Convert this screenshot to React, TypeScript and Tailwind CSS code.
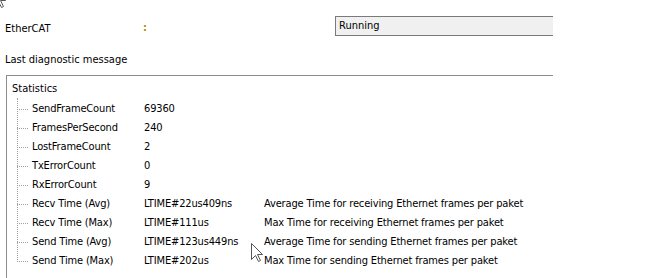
import React from "react";

interface StatRow {
  label: string;
  value: string;
  desc?: string;
}

const rows: StatRow[] = [
  { label: "SendFrameCount", value: "69360" },
  { label: "FramesPerSecond", value: "240" },
  { label: "LostFrameCount", value: "2" },
  { label: "TxErrorCount", value: "0" },
  { label: "RxErrorCount", value: "9" },
  { label: "Recv Time (Avg)", value: "LTIME#22us409ns", desc: "Average Time for receiving Ethernet frames per paket" },
  { label: "Recv Time (Max)", value: "LTIME#111us", desc: "Max Time for receiving Ethernet frames per paket" },
  { label: "Send Time (Avg)", value: "LTIME#123us449ns", desc: "Average Time for sending Ethernet frames per paket" },
  { label: "Send Time (Max)", value: "LTIME#202us", desc: "Max Time for sending Ethernet frames per paket" },
];

function Cursor({ className }: { className: string }) {
  return (
    <svg className={className} width="13" height="20" viewBox="0 0 13 20">
      <path
        d="M0.5 0.5 L0.5 16.5 L4.5 12.5 L7.5 18.5 L9.5 17.5 L6.5 11.5 L11.5 11.5 Z"
        fill="#fff"
        stroke="#555"
        strokeWidth="1"
      />
    </svg>
  );
}

export default function App() {
  return (
    <div
      className="relative w-[649px] h-[278px] overflow-hidden bg-white text-[11px] text-black"
      style={{ fontFamily: '"DejaVu Sans Condensed", "DejaVu Sans", sans-serif', fontStretch: "condensed" }}
    >
      {/* header row */}
      <div className="flex items-center h-[20px] mt-[16px] pl-[5px]">
        <div className="w-[138px] pt-[6px]">EtherCAT</div>
        <div className="w-[192px] pt-[5px] font-bold text-[#b8860b]">:</div>
        <div className="flex items-center h-[20px] w-[218px] pl-[3px] pt-[1px] bg-[#f0f0f0] border-y border-l border-[#7a7a7a]">
          Running
        </div>
      </div>

      <div className="pl-[5px] mt-[17px] h-[14px] leading-[14px]">Last diagnostic message</div>

      {/* statistics tree */}
      <div className="ml-[6px] mt-[8px] w-[547px] h-[220px] border-t border-l border-[#8c8c8c]">
        <div className="pl-[5px] pt-[6px] h-[24px] leading-[14px]">Statistics</div>
        <div className="relative ml-[10px] tracking-[-0.15px]">
          <div className="absolute left-0 top-[-2px] h-[164px] border-l border-dotted border-[#a0a0a0]" />
          {rows.map((r) => (
            <div key={r.label} className="flex items-center h-[19px]">
              <div className="w-[11px] border-t border-dotted border-[#a0a0a0]" />
              <div className="w-[116px] pl-[4px]">{r.label}</div>
              <div className="w-[120px]">{r.value}</div>
              {r.desc && <div>{r.desc}</div>}
            </div>
          ))}
        </div>
      </div>

      <Cursor className="absolute left-[-6px] top-[-11px]" />
      <Cursor className="absolute left-[251px] top-[243px]" />
    </div>
  );
}
